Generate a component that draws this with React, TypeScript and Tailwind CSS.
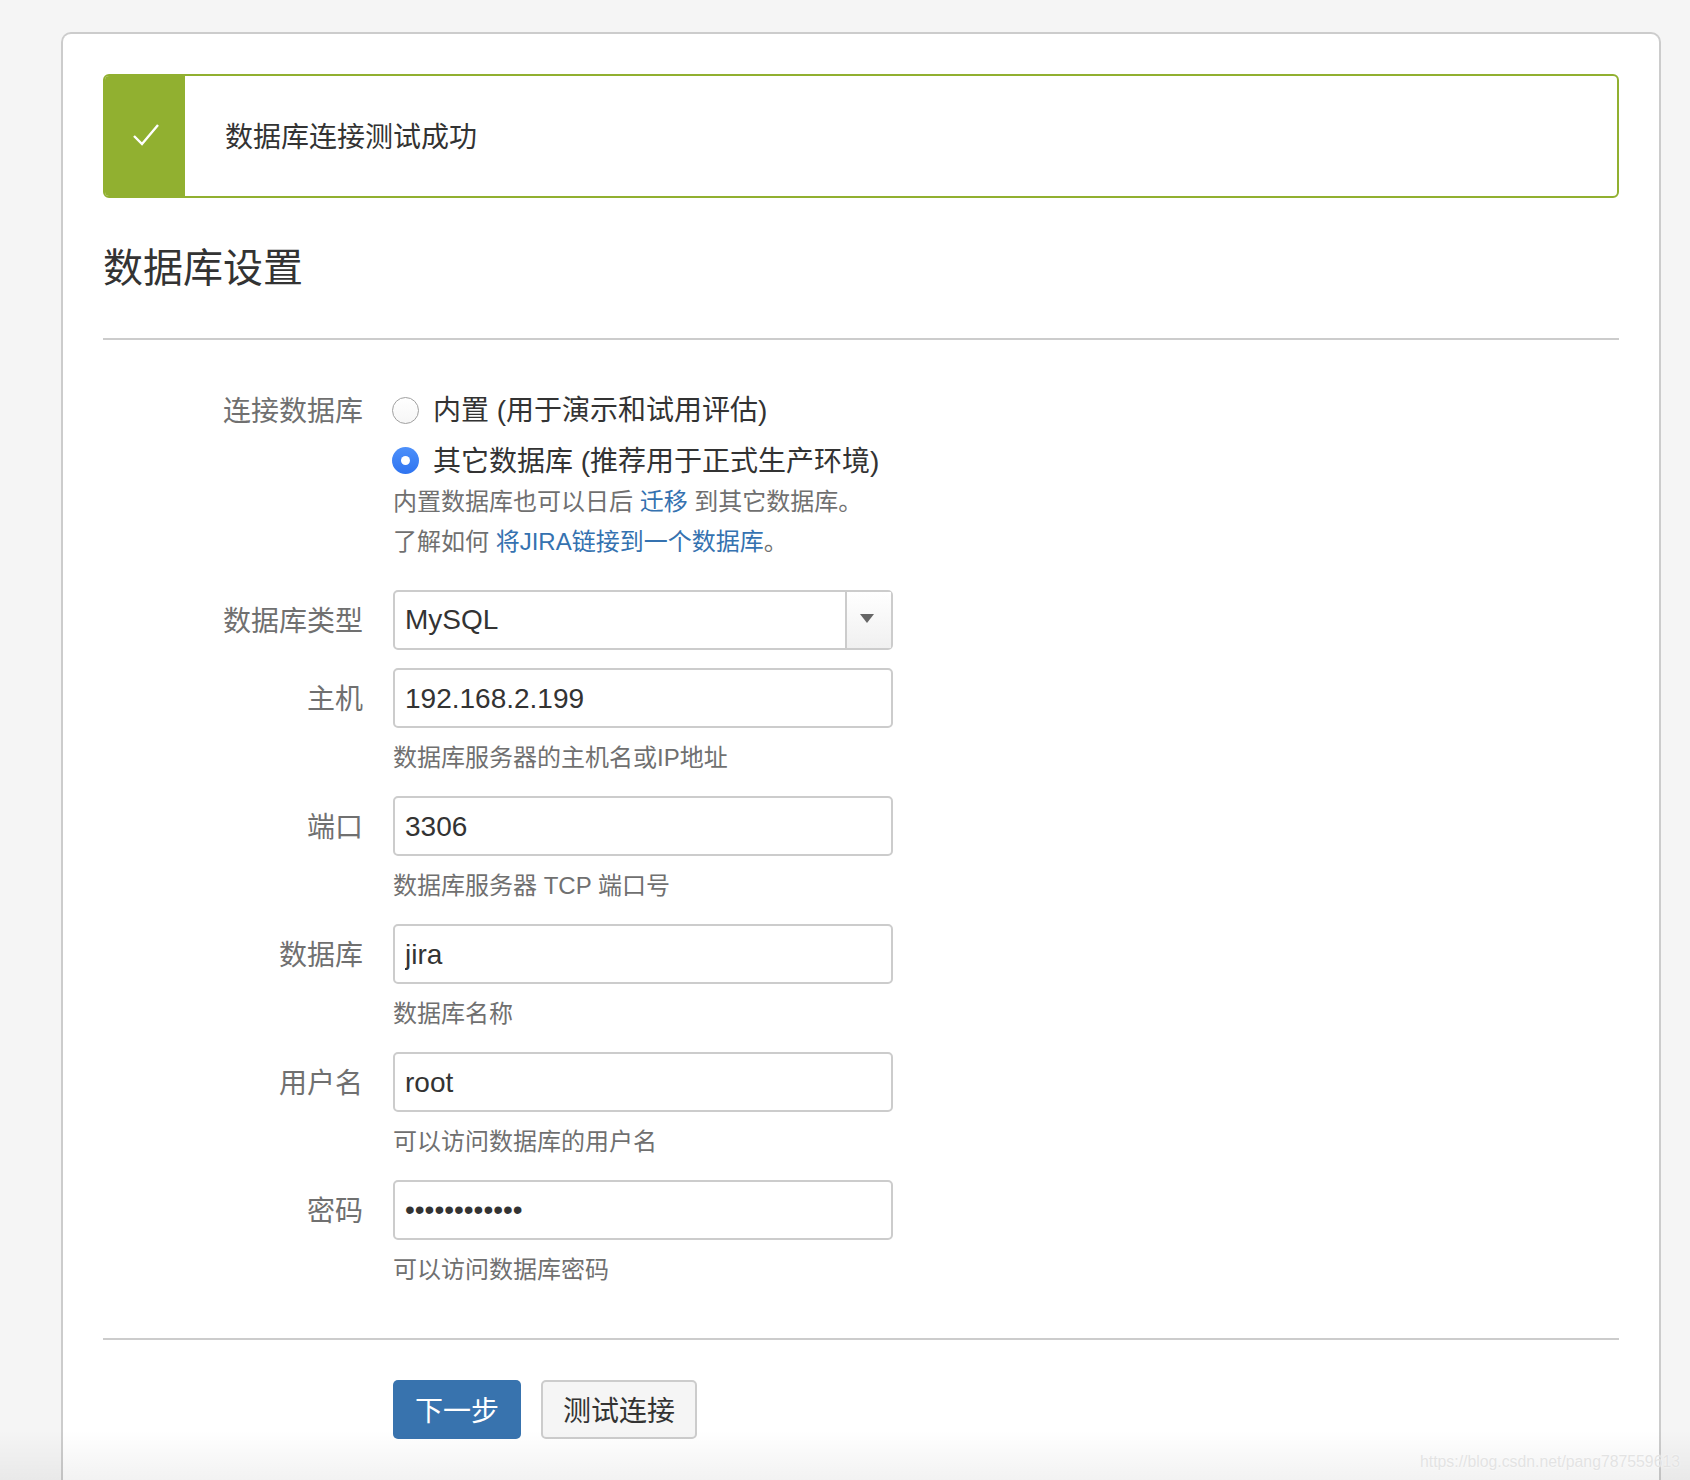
const cjk = "font-['Liberation_Sans','Noto_Sans_CJK_SC',sans-serif]";

const fields = [
  { label: "主机", value: "192.168.2.199", hint: "数据库服务器的主机名或IP地址" },
  { label: "端口", value: "3306", hint: "数据库服务器 TCP 端口号" },
  { label: "数据库", value: "jira", hint: "数据库名称" },
  { label: "用户名", value: "root", hint: "可以访问数据库的用户名" },
  { label: "密码", value: "jira12345678", hint: "可以访问数据库密码", password: true },
];

function Label({ children }: { children?: React.ReactNode }) {
  return <div className="w-[260px] shrink-0 pt-[3px] text-right text-[28px] text-[#707070]">{children}</div>;
}

function Radio({ checked }: { checked?: boolean }) {
  if (checked) {
    return (
      <span className="-ml-px flex h-[27px] w-[27px] shrink-0 items-center justify-center rounded-full bg-gradient-to-b from-[#4d90fa] to-[#2f74f0]">
        <span className="h-[9px] w-[9px] rounded-full bg-white" />
      </span>
    );
  }
  return <span className="-ml-px h-[27px] w-[27px] shrink-0 rounded-full border border-[#a0a0a0] bg-gradient-to-b from-white to-[#f6f6f6]" />;
}

export default function App() {
  return (
    <div className={`relative h-[1480px] overflow-hidden bg-[#f5f5f5] pl-[61px] pr-[29px] pt-[32px] text-[#333] ${cjk}`}>
      <div className="h-full rounded-t-[10px] border-2 border-b-0 border-[#ccc] bg-white px-10 pt-10">
        <div className="flex h-[124px] overflow-hidden rounded-[6px] border-2 border-[#91b030]">
          <div className="flex w-[80px] items-center justify-center bg-[#91b030]">
            <svg width="28" height="24" viewBox="0 0 28 24" fill="none" stroke="white" strokeWidth="2.4" className="-mt-[2px] ml-[2px]">
              <path d="M2 13 L10 21 L26 2" />
            </svg>
          </div>
          <div className="flex items-center pl-[40px] pt-[4px] text-[28px]">数据库连接测试成功</div>
        </div>

        <h1 className="mt-[42px] text-[40px] leading-[56px] font-normal">数据库设置</h1>
        <div className="mt-[42px] h-[2px] bg-[#ccc]" />

        <div className="pt-[47px]">
          <div className="flex h-[46px] items-center gap-[30px]">
            <Label>连接数据库</Label>
            <label className="flex items-center gap-[14px] text-[28px]">
              <Radio />
              <span className="pt-[2px]">内置 (用于演示和试用评估)</span>
            </label>
          </div>
          <div className="mt-1 flex h-[46px] items-center gap-[30px]">
            <Label />
            <label className="flex items-center gap-[14px] text-[28px]">
              <Radio checked />
              <span className="pt-[4px]">其它数据库 (推荐用于正式生产环境)</span>
            </label>
          </div>
          <div className="ml-[290px] text-[24px] leading-[39px] text-[#707070]">
            <p className="-mt-px">
              内置数据库也可以日后 <a className="text-[#3572b0]">迁移</a> 到其它数据库。
            </p>
            <p className="mt-px">
              了解如何 <a className="text-[#3572b0]">将JIRA链接到一个数据库</a>。
            </p>
          </div>

          <div className="mt-[29px] mb-[18px] flex items-center gap-[30px]">
            <Label>数据库类型</Label>
            <div className="flex h-[60px] w-[500px] items-stretch rounded-[5px] border-2 border-[#ccc] bg-white">
              <div className="flex flex-1 items-center pl-[10px] text-[28px]">MySQL</div>
              <div className="flex w-[46px] items-center justify-center border-l-2 border-[#ccc] bg-gradient-to-b from-white to-[#f0f0f0]">
                <span className="-mt-[3px] mr-[4px] h-0 w-0 border-x-[7px] border-t-[9px] border-x-transparent border-t-[#666]" />
              </div>
            </div>
          </div>

          {fields.map((f) => (
            <div key={f.label} className="mb-[19px]">
              <div className="flex items-center gap-[30px]">
                <Label>{f.label}</Label>
                <input
                  readOnly
                  type={f.password ? "password" : "text"}
                  value={f.value}
                  className={`h-[60px] w-[500px] rounded-[5px] border-2 border-[#ccc] bg-white pl-[10px] text-[28px] text-[#333] outline-none ${f.password ? "" : "pt-[2px]"}`}
                />
              </div>
              <div className="mt-[11px] ml-[290px] text-[24px] leading-[38px] text-[#707070]">{f.hint}</div>
            </div>
          ))}

          <div className="mt-[49px] h-[2px] bg-[#ccc]" />
          <div className="ml-[290px] mt-[40px] flex gap-5">
            <button className="h-[59px] w-[128px] rounded-[5px] bg-[#3873ae] pt-[4px] text-[28px] text-white">下一步</button>
            <button className="h-[59px] w-[156px] rounded-[5px] border-2 border-[#ccc] bg-[#f5f5f5] pt-[4px] text-[28px] text-[#333]">测试连接</button>
          </div>
        </div>
      </div>

      <div className="pointer-events-none absolute inset-x-0 bottom-0 h-[50px] bg-gradient-to-b from-transparent to-black/5" />
      <span className="absolute right-[10px] bottom-[9px] font-['Liberation_Sans',sans-serif] text-[15.8px] leading-[18px] text-[#e3e3e3] [text-shadow:0_0_2px_#fff]">
        https://blog.csdn.net/pang787559613
      </span>
    </div>
  );
}
